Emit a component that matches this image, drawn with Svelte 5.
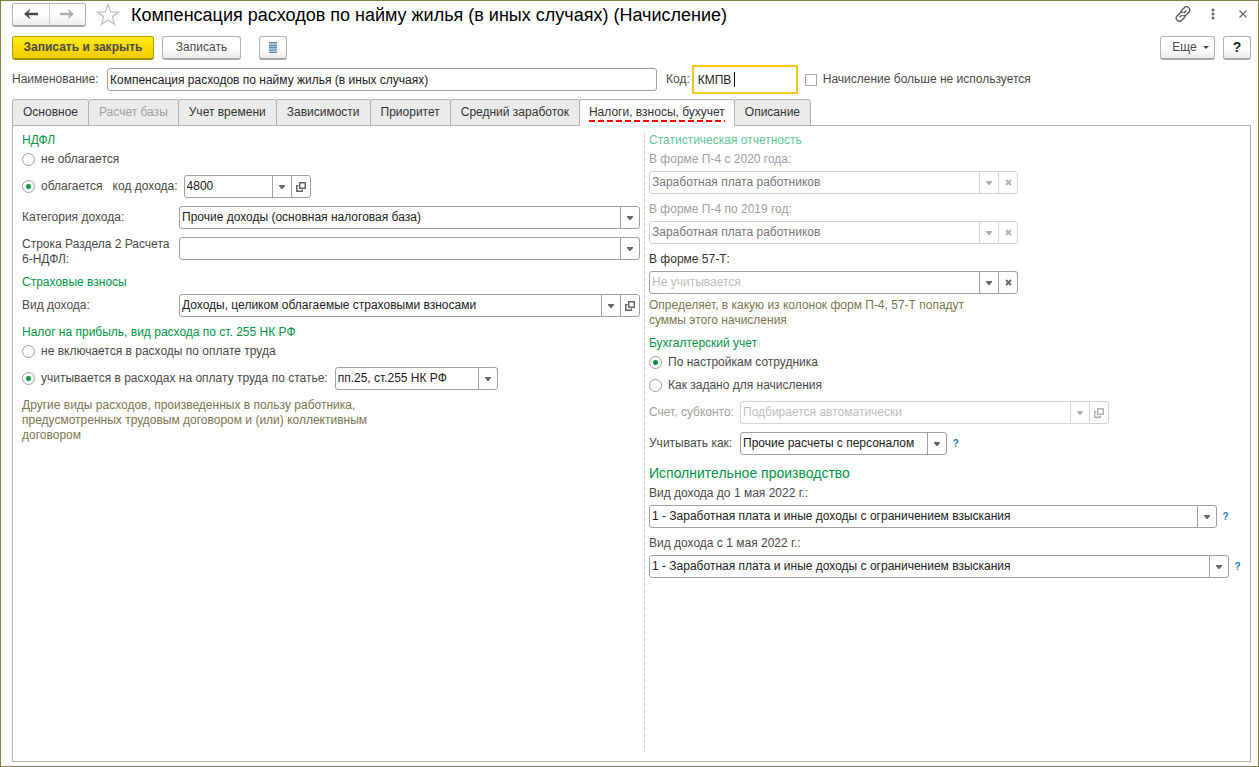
<script>
  const tabs = [
    { title: 'Основное' },
    { title: 'Расчет базы', disabled: true },
    { title: 'Учет времени' },
    { title: 'Зависимости' },
    { title: 'Приоритет' },
    { title: 'Средний заработок' },
    { title: 'Налоги, взносы, бухучет' },
    { title: 'Описание' }
  ];
  let active = $state(6);
  let name = $state('Компенсация расходов по найму жилья (в иных случаях)');
  let code = $state('КМПВ');
  let unused = $state(false);
  let ndfl = $state('yes');
  let profit = $state('yes');
  let accounting = $state('employee');
</script>

{#snippet picker(id, value, extra = '', disabled = false, empty = false)}
  <div class="field" class:disabled>
    <div class="pick">
      <select {id} {disabled} class:empty>
        <option>{value}</option>
      </select>
      <span class="cell arrow">
        <svg width="6" height="4" viewBox="0 0 6 4"><path d="M0 0h6v1L3.5 4h-1L0 1z" fill="currentColor" /></svg>
      </span>
    </div>
    {#if extra === 'open'}
      <button class="cell" {disabled} aria-label="Открыть">
        <svg width="10" height="10" viewBox="0 0 10 10" fill="none" stroke="currentColor">
          <rect x="3.75" y="0.75" width="5.5" height="5.5" stroke-width="1.5" />
          <path d="M2.5 3.7H0.75V9.25H6.3V7.5" stroke-width="1.5" />
        </svg>
      </button>
    {:else if extra === 'clear'}
      <button class="cell" {disabled} aria-label="Очистить">
        <svg width="7" height="7" viewBox="0 0 7 7"><path d="M1 1l5 5M6 1L1 6" stroke="currentColor" stroke-width="1.8" /></svg>
      </button>
    {/if}
  </div>
{/snippet}

<main>
  <header>
    <div class="nav">
      <button aria-label="Назад">
        <svg width="14" height="10" viewBox="0 0 14 10" fill="#4a4a4a"><path d="M0 5L6 0v1L4.500 3.800H14v2.400H4.500L6 9v1z" /></svg>
      </button>
      <button aria-label="Вперед">
        <svg width="14" height="10" viewBox="0 0 14 10" fill="#adadad"><path d="M14 5L8 0v1l1.500 2.800H0v2.400h9.500L8 9v1z" /></svg>
      </button>
    </div>
    <button class="plain star" aria-label="В избранное">
      <svg width="24" height="23" viewBox="0 0 24 23"><path d="M12 1.500l2.600 7.300 8 .2-6.300 4.800 2.300 7.700-6.600-4.600-6.600 4.600 2.300-7.700L1.400 9l8-.2z" fill="#fff" stroke="#b5bcc4" stroke-width="1.200" /></svg>
    </button>
    <h1>Компенсация расходов по найму жилья (в иных случаях) (Начисление)</h1>
    <div class="window">
      <button class="plain" aria-label="Ссылка">
        <svg width="16" height="16" viewBox="0 0 16 16" fill="none" stroke="#5a5a5a" stroke-width="1.300" stroke-linecap="round">
          <path d="M5.800 5.200L9 2a3.200 3.200 0 0 1 5 4L11 9a2.800 2.800 0 0 1-2.800.600" />
          <path d="M10.200 10.800L7 14a3.200 3.200 0 0 1-5-4L5 7a2.800 2.800 0 0 1 2.800-.600" />
          <path d="M5 11l1.800-1.800M9.200 6.800L11 5" />
        </svg>
      </button>
      <button class="plain" aria-label="Меню">
        <svg width="4" height="12" viewBox="0 0 4 12" fill="#666"><circle cx="2" cy="2" r="1.500" /><circle cx="2" cy="6" r="1.500" /><circle cx="2" cy="10" r="1.500" /></svg>
      </button>
      <button class="plain" aria-label="Закрыть">
        <svg width="8" height="8" viewBox="0 0 8 8"><path d="M0.500 0.500l7 7M7.500 0.500l-7 7" stroke="#666" stroke-width="1.200" /></svg>
      </button>
    </div>
  </header>

  <div class="toolbar">
    <button class="btn primary">Записать и закрыть</button>
    <button class="btn write">Записать</button>
    <button class="btn square list" aria-label="Список">
      <svg width="8" height="11" viewBox="0 0 8 11"><path d="M0 0h8v11H0z" fill="#a9c4da" /><path d="M0 .5h8M0 3.500h8M0 5.500h8M0 8h8M0 10.500h8" stroke="#5f87a8" /></svg>
    </button>
    <button class="btn more">Еще
      <svg width="6" height="3" viewBox="0 0 6 3"><path d="M0 0h6L3 3z" fill="#444" /></svg>
    </button>
    <button class="btn square help">?</button>
  </div>

  <div class="ident">
    <label class="name-label" for="name">Наименование:</label>
    <input id="name" class="text" type="text" bind:value={name} />
    <label class="code-label" for="code">Код:</label>
    <div class="code">
      <input id="code" type="text" bind:value={code} />
      <i></i>
    </div>
    <label class="check"><input type="checkbox" bind:checked={unused} />Начисление больше не используется</label>
  </div>

  <div class="tabs" role="tablist">
    {#each tabs as tab, i}
      <button role="tab" aria-selected={active === i} class:active={active === i} disabled={tab.disabled} onclick={() => (active = i)}>
        <span>{tab.title}</span>
      </button>
    {/each}
  </div>

  <div class="panel">
    <section class="left">
      <h2>НДФЛ</h2>
      <label class="radio"><input type="radio" name="ndfl" value="no" bind:group={ndfl} />не облагается</label>
      <div class="row">
        <label class="radio"><input type="radio" name="ndfl" value="yes" bind:group={ndfl} />облагается</label>
        <label class="inner" for="income-code">код дохода:</label>
        <div class="w-code">{@render picker('income-code', '4800', 'open')}</div>
      </div>
      <div class="row labelled">
        <label for="category">Категория дохода:</label>
        {@render picker('category', 'Прочие доходы (основная налоговая база)')}
      </div>
      <div class="row labelled">
        <label for="line">Строка Раздела 2 Расчета 6-НДФЛ:</label>
        {@render picker('line', '')}
      </div>
      <h2>Страховые взносы</h2>
      <div class="row labelled">
        <label for="insurance">Вид дохода:</label>
        {@render picker('insurance', 'Доходы, целиком облагаемые страховыми взносами', 'open')}
      </div>
      <h2>Налог на прибыль, вид расхода по ст. 255 НК РФ</h2>
      <label class="radio"><input type="radio" name="profit" value="no" bind:group={profit} />не включается в расходы по оплате труда</label>
      <div class="row">
        <label class="radio"><input type="radio" name="profit" value="yes" bind:group={profit} />учитывается в расходах на оплату труда по статье:</label>
        <div class="w-article">{@render picker('article', 'пп.25, ст.255 НК РФ')}</div>
      </div>
      <p class="hint">Другие виды расходов, произведенных в пользу работника, предусмотренных трудовым договором и (или) коллективным договором</p>
    </section>

    <section class="right">
      <h2 class="pale">Статистическая отчетность</h2>
      <div class="stack w-stat off">
        <label for="p4-2020">В форме П-4 с 2020 года:</label>
        {@render picker('p4-2020', 'Заработная плата работников', 'clear', true)}
      </div>
      <div class="stack w-stat off">
        <label for="p4-2019">В форме П-4 по 2019 год:</label>
        {@render picker('p4-2019', 'Заработная плата работников', 'clear', true)}
      </div>
      <div class="stack w-stat">
        <label class="dark" for="f57">В форме 57-Т:</label>
        {@render picker('f57', 'Не учитывается', 'clear', false, true)}
        <p class="hint">Определяет, в какую из колонок форм П-4, 57-Т попадут суммы этого начисления</p>
      </div>
      <h2>Бухгалтерский учет</h2>
      <label class="radio"><input type="radio" name="acc" value="employee" bind:group={accounting} />По настройкам сотрудника</label>
      <label class="radio"><input type="radio" name="acc" value="own" bind:group={accounting} />Как задано для начисления</label>
      <div class="row account off">
        <label for="account">Счет, субконто:</label>
        <div class="w-stat">{@render picker('account', 'Подбирается автоматически', 'open', true, true)}</div>
      </div>
      <div class="row account">
        <label for="treat">Учитывать как:</label>
        <div class="w-treat">{@render picker('treat', 'Прочие расчеты с персоналом')}</div>
        <button class="plain q">?</button>
      </div>
      <h2 class="large">Исполнительное производство</h2>
      <div class="stack short">
        <label for="before">Вид дохода до 1 мая 2022 г.:</label>
        <div class="row">
          {@render picker('before', '1 - Заработная плата и иные доходы с ограничением взыскания')}
          <button class="plain q">?</button>
        </div>
      </div>
      <div class="stack">
        <label for="after">Вид дохода с 1 мая 2022 г.:</label>
        <div class="row">
          {@render picker('after', '1 - Заработная плата и иные доходы с ограничением взыскания')}
          <button class="plain q">?</button>
        </div>
      </div>
    </section>
  </div>
</main>

<style>
  :global(body) { background: #fff; }
  main, main * { box-sizing: border-box; }
  main {
    min-height: 100vh;
    display: flex;
    flex-direction: column;
    border: 1px solid #808040;
    padding: 1px 7px 4px 11px;
    font: 12px/15px "Liberation Sans", Arial, sans-serif;
    color: #4a4a4a;
  }
  button, input, select { font: inherit; color: inherit; margin: 0; }
  h1, h2, p { margin: 0; font-weight: normal; }
  svg { display: block; flex: none; }
  .plain { border: 0; background: none; padding: 0; display: grid; place-items: center; }

  header { display: flex; align-items: center; height: 25px; }
  .nav {
    display: flex;
    width: 74px;
    height: 24px;
    border: 1px solid #b3b3b3;
    border-bottom: 2px solid #a6a6a6;
    border-radius: 3px;
    background: linear-gradient(#fff 50%, #ececec);
  }
  .nav button { flex: 1; border: 0; background: none; padding: 0; display: grid; place-items: center; }
  .nav button + button { border-left: 1px solid #ccc; }
  .star { margin-left: 10px; }
  h1 { margin-left: 11px; font-size: 18px; line-height: 24px; color: #000; white-space: nowrap; }
  .window { margin: 0 -7px 2px auto; display: flex; align-items: center; }
  .window button { width: 30px; height: 20px; }

  .toolbar { display: flex; margin-top: 9px; }
  .btn {
    height: 24px;
    border: 1px solid #b3b3b3;
    border-bottom: 2px solid #a6a6a6;
    border-radius: 3px;
    padding: 0;
    background: linear-gradient(#fff 50%, #ececec);
    display: flex;
    align-items: center;
    justify-content: center;
  }
  .primary {
    width: 142px;
    font-weight: bold;
    border-color: #b5a000 #b5a000 #a08c00;
    background: linear-gradient(#ffeb1f, #fbdb00 50%, #efcd00);
  }
  .write { width: 79px; margin-left: 8px; }
  .square { width: 28px; }
  .list { margin-left: 18px; }
  .more { width: 55px; margin-left: auto; gap: 6px; padding-left: 6px; }
  .help { margin-left: 8px; font-weight: bold; font-size: 14px; color: #222; }

  .ident { display: flex; align-items: center; height: 29px; margin-top: 5px; }
  .name-label { width: 95px; }
  .text {
    width: 550px;
    height: 23px;
    padding: 0 2px;
    border: 1px solid #a0a0a0;
    border-radius: 3px;
    color: #222;
    outline: 0;
  }
  .code-label { margin-left: 9px; }
  .code { position: relative; width: 106px; height: 29px; margin-left: 2px; border: 2px solid #f8c81e; }
  .code input { width: 100%; height: 100%; border: 0; padding: 0 4px; outline: 0; color: #222; background: none; }
  .code i { position: absolute; left: 40px; top: 5px; width: 1px; height: 15px; background: #000; }
  .check { display: flex; align-items: center; gap: 6px; margin-left: 7px; }
  .check input { appearance: none; width: 12px; height: 12px; border: 1px solid #a6a6a6; background: #fff; }
  .check input:checked { background: #009646; }

  .tabs { display: flex; margin-top: 5px; position: relative; }
  .tabs button {
    height: 27px;
    margin: 0 -1px -1px 0;
    padding: 0 10px;
    border: 1px solid #b3b3b3;
    border-radius: 3px 3px 0 0;
    background: #ebebeb;
    color: #333;
    display: flex;
    align-items: center;
    white-space: nowrap;
  }
  .tabs button:disabled { color: #a0a0a0; }
  .tabs .active { background: #fff; border-bottom-color: #fff; padding: 0 9px; }
  .tabs span { position: relative; }
  .tabs .active span::after {
    content: "";
    position: absolute;
    left: 0;
    right: 0;
    top: 15px;
    height: 2px;
    background: repeating-linear-gradient(90deg, #f00 0 6px, transparent 6px 9px);
  }

  .panel {
    flex: 1;
    display: grid;
    grid-template-columns: minmax(0, 618fr) minmax(0, 597fr);
    column-gap: 4px;
    border: 1px solid #b3b3b3;
    padding: 7px 9px 9px;
  }
  section { display: flex; flex-direction: column; align-items: stretch; gap: 8px; }
  .right {
    padding-left: 5px;
    background: repeating-linear-gradient(#d0d0d0 0 4px, transparent 4px 6px) left / 1px 100% no-repeat;
  }
  h2 { font-size: 12px; line-height: 15px; color: #009646; margin-bottom: -4px; }
  .pale { color: #62c796; }
  .large { font-size: 14px; line-height: 21px; margin-bottom: -6px; }
  .hint { color: #7c7650; max-width: 353px; }
  .radio { display: flex; align-items: center; gap: 6px; white-space: nowrap; }
  .radio input {
    appearance: none;
    width: 13px;
    height: 13px;
    border: 1px solid #a0a0a0;
    border-radius: 50%;
    background: #fff;
  }
  .radio input:checked { background: radial-gradient(circle, #009646 2px, #fff 3px); }
  .row { display: flex; align-items: center; }
  .labelled { display: grid; grid-template-columns: 157px minmax(0, 1fr); align-items: start; }
  .labelled label { padding: 0; min-height: 23px; align-content: center; }
  .inner { margin: 0 6px 0 10px; }
  .w-code { width: 127px; }
  .w-article { width: 163px; margin-left: 7px; }
  .w-stat { width: 369px; }
  .w-treat { width: 207px; }
  .account > label { width: 91px; }
  .off { color: #a0a0a0; }
  .dark { color: #333; }
  .stack { display: flex; flex-direction: column; gap: 4px; }
  .short { padding-right: 12px; }
  .q { width: 7px; margin-left: 5px; font-weight: bold; font-size: 10px; color: #1a7fc1; }

  .field {
    flex: 1;
    min-width: 0;
    display: flex;
    height: 23px;
    min-height: 23px;
    border: 1px solid #a0a0a0;
    border-radius: 3px;
    color: #666;
    background: #fff;
  }
  .field.disabled { border-color: #d4d4d4; color: #b0b0b0; }
  .pick { flex: 1; min-width: 0; display: grid; }
  select {
    grid-area: 1 / 1;
    appearance: none;
    width: 100%;
    border: 0;
    padding: 0 20px 0 2px;
    background: none;
    color: #222;
    opacity: 1;
    outline: 0;
  }
  select:disabled { color: #777; }
  select.empty { color: #bdbdbd; }
  .cell {
    width: 19px;
    border: 0;
    border-left: 1px solid #a0a0a0;
    padding: 0;
    background: none;
    display: grid;
    place-items: center;
    color: inherit;
  }
  .disabled .cell { border-color: #d4d4d4; }
  .arrow { grid-area: 1 / 1; justify-self: end; pointer-events: none; }
</style>
